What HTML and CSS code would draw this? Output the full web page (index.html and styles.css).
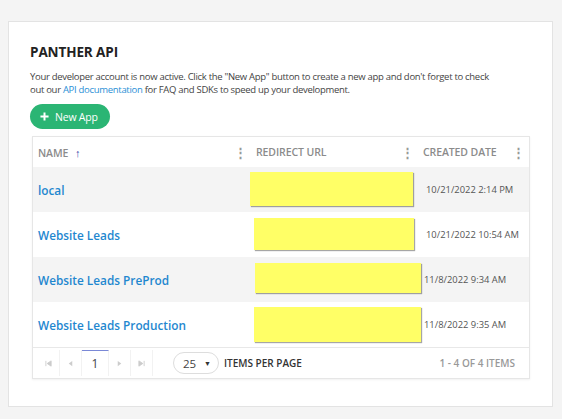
FILE: index.html
```html
<!DOCTYPE html>
<html>
<head>
<meta charset="utf-8">
<link rel="stylesheet" href="styles.css">
</head>
<body>
<div class="card">
  <h1 class="title">PANTHER API</h1>
  <p class="intro">Your developer account is now active. Click the "New App" button to create a new app and don't forget to check out our <a class="link" href="#">API documentation</a> for FAQ and SDKs to speed up your development.</p>
  <button class="btn-new"><svg class="plus" viewBox="0 0 10 10" width="9" height="9"><path d="M5 0.5V9.5M0.5 5H9.5" stroke="#fff" stroke-width="2.2"/></svg>New App</button>
  <div class="grid">
    <table class="tbl">
      <colgroup><col class="c1"><col class="c2"><col class="c3"></colgroup>
      <thead>
        <tr>
          <th><div class="th"><span>NAME <span class="sort">&#8593;</span></span><span class="kebab">&#8942;</span></div></th>
          <th><div class="th"><span>REDIRECT URL</span><span class="kebab">&#8942;</span></div></th>
          <th><div class="th"><span>CREATED DATE</span><span class="kebab">&#8942;</span></div></th>
        </tr>
      </thead>
      <tbody>
        <tr class="alt"><td class="name">local</td><td class="url"><span class="redact r1"></span></td><td class="date">10/21/2022 2:14 PM</td></tr>
        <tr><td class="name">Website Leads</td><td class="url"><span class="redact r2"></span></td><td class="date">10/21/2022 10:54 AM</td></tr>
        <tr class="alt"><td class="name">Website Leads PreProd</td><td class="url"><span class="redact r3"></span></td><td class="date d2">11/8/2022 9:34 AM</td></tr>
        <tr><td class="name">Website Leads Production</td><td class="url"><span class="redact r4"></span></td><td class="date d2">11/8/2022 9:35 AM</td></tr>
      </tbody>
    </table>
    <div class="pager">
      <div class="pages">
        <span class="pbtn"><svg viewBox="0 0 8 8" width="7" height="7"><path d="M1 1V7M7 1L2.5 4L7 7Z" fill="#ccc" stroke="#ccc" stroke-width="1"/></svg></span>
        <span class="pbtn"><svg viewBox="0 0 8 8" width="7" height="7"><path d="M6 1L2 4L6 7Z" fill="#ccc"/></svg></span>
        <span class="pbtn cur">1</span>
        <span class="pbtn"><svg viewBox="0 0 8 8" width="7" height="7"><path d="M2 1L6 4L2 7Z" fill="#ccc"/></svg></span>
        <span class="pbtn"><svg viewBox="0 0 8 8" width="7" height="7"><path d="M7 1V7M1 1L5.5 4L1 7Z" fill="#ccc" stroke="#ccc" stroke-width="1"/></svg></span>
      </div>
      <div class="size">25<span class="caret">&#9660;</span></div>
      <span class="ipp">ITEMS PER PAGE</span>
      <span class="count">1 - 4 OF 4 ITEMS</span>
    </div>
  </div>
</div>
</body>
</html>
```
FILE: styles.css
```css
html, body { margin: 0; padding: 0; }
body {
  background: #f4f4f4;
  font-family: "Open Sans", "Liberation Sans", sans-serif;
  width: 562px;
  height: 419px;
  overflow: hidden;
}
.card {
  margin: 21px 9px 0 8px;
  height: 386px;
  box-sizing: border-box;
  background: #fff;
  border: 1px solid #e3e3e3;
  padding: 21px 21px 0 21px;
}
.title {
  margin: 0;
  font-size: 13.5px;
  font-weight: 700;
  color: #222;
  line-height: 18px;
  letter-spacing: -0.1px;
}
.intro {
  margin: 9px 0 0 0;
  max-width: 468px;
  font-size: 9.5px;
  line-height: 13px;
  letter-spacing: -0.3px;
  color: #444;
}
.link { color: #2a8fd6; text-decoration: none; }
.btn-new {
  margin-top: 8px;
  display: flex;
  align-items: center;
  gap: 6px;
  height: 25px;
  width: 80px;
  padding: 0 0 0 10px;
  border: none;
  border-radius: 13px;
  background: #2bb574;
  color: #fff;
  font-family: inherit;
  font-size: 10.5px;
  letter-spacing: -0.2px;
}
.plus { display: block; }
.grid {
  margin: 7px 0 0 2px;
  width: 498px;
  box-sizing: border-box;
  border: 1px solid #e6e6e6;
  box-shadow: 0 1px 2px rgba(0,0,0,0.06);
}
.tbl {
  width: 100%;
  border-collapse: collapse;
  table-layout: fixed;
}
.c1 { width: 218px; }
.c2 { width: 167px; }
.c3 { width: 111px; }
th {
  height: 30px;
  padding: 0;
  text-align: left;
  font-weight: 600;
  font-size: 10.5px;
  color: #8b8b8b;
}
.th {
  display: flex;
  justify-content: space-between;
  align-items: center;
  padding: 0 4px 0 5px;
}
.th span:first-child { letter-spacing: -0.1px; }
.sort { color: #3a3fa8; font-size: 11px; font-weight: 700; margin-left: 4px; }
.kebab { color: #999; font-size: 13px; font-weight: 700; }
td { height: 45px; padding: 0; }
tr.alt td { background: #f4f4f4; }
.name {
  padding-left: 5px;
  font-size: 11.8px;
  font-weight: 600;
  color: #1f87cf;
}
.url { position: relative; }
.date { font-size: 9.4px; color: #555; padding-left: 8px; }
.date.d2 { padding-left: 6px; }
.redact {
  position: absolute;
  background: #ffff66;
  box-shadow: 1px 1px 1px rgba(0,0,0,0.35);
}
.r1 { left: -1px; top: 5px; width: 163px; height: 34px; }
.r2 { left: 3px; top: 6px; width: 160px; height: 32px; }
.r3 { left: 4px; top: 6px; width: 166px; height: 30px; }
.r4 { left: 3px; top: 5px; width: 167px; height: 35px; }
.pager {
  display: flex;
  align-items: center;
  height: 30px;
  border-top: 1px solid #e8e8e8;
  font-size: 10px;
  padding: 0 14px 0 5px;
}
.pages { display: flex; }
.pbtn {
  width: 22px;
  height: 26px;
  display: flex;
  align-items: center;
  justify-content: center;
  border-right: 1px solid #f2f2f2;
  color: #444;
  box-sizing: border-box;
}
.pbtn.cur {
  width: 27px;
  font-size: 12px;
  border-top: 1px solid #7a88d6;
}
.size {
  margin-left: 20px;
  width: 46px;
  height: 22px;
  box-sizing: border-box;
  border: 1px solid #ddd;
  border-radius: 11px;
  display: flex;
  align-items: center;
  justify-content: space-between;
  padding: 0 7px 0 9px;
  font-size: 11.5px;
  color: #444;
}
.caret { font-size: 7px; color: #333; }
.ipp { margin-left: 5px; font-weight: 600; color: #333; }
.count { margin-left: auto; font-weight: 600; color: #999; }
```
